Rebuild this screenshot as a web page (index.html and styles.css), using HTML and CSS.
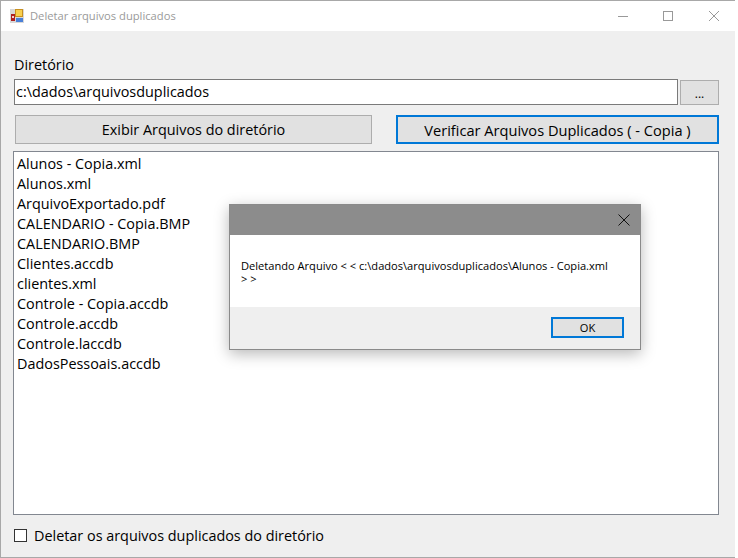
FILE: index.html
```html
<!DOCTYPE html>
<html lang="pt">
<head>
<meta charset="utf-8">
<title>Deletar arquivos duplicados</title>
<link rel="stylesheet" href="styles.css">
</head>
<body>
<div class="window">
  <header class="titlebar">
    <svg class="app-icon" width="14" height="14" viewBox="0 0 14 14">
      <rect x="0" y="0" width="14" height="14" fill="#d8d8d8"/>
      <rect x="1" y="5" width="4" height="7" fill="#b02020"/>
      <rect x="2" y="7" width="2" height="2" fill="#f0d0d0"/>
      <rect x="5" y="0" width="8" height="8" fill="#c89020"/>
      <rect x="6" y="1" width="6" height="6" fill="#f8d050"/>
      <rect x="6" y="9" width="7" height="4" fill="#4a80d8"/>
    </svg>
    <span class="title">Deletar arquivos duplicados</span>
    <div class="controls">
      <svg class="ctl ctl-min" width="10" height="10" viewBox="0 0 10 10"><path d="M0 5.5H10" stroke="#999" fill="none"/></svg>
      <svg class="ctl ctl-max" width="10" height="10" viewBox="0 0 10 10"><rect x="0.5" y="0.5" width="9" height="9" stroke="#999" fill="none"/></svg>
      <svg class="ctl ctl-close" width="10" height="10" viewBox="0 0 10 10"><path d="M0 0L10 10M10 0L0 10" stroke="#999" fill="none"/></svg>
    </div>
  </header>
  <main class="content">
    <div class="label">Diretório</div>
    <div class="path-row">
      <div class="textbox">c:\dados\arquivosduplicados</div>
      <button class="btn btn-browse">...</button>
    </div>
    <div class="action-row">
      <button class="btn btn-show">Exibir Arquivos do diretório</button>
      <button class="btn btn-verify">Verificar Arquivos Duplicados ( - Copia )</button>
    </div>
    <ul class="listbox">
      <li>Alunos - Copia.xml</li>
      <li>Alunos.xml</li>
      <li>ArquivoExportado.pdf</li>
      <li>CALENDARIO - Copia.BMP</li>
      <li>CALENDARIO.BMP</li>
      <li>Clientes.accdb</li>
      <li>clientes.xml</li>
      <li>Controle - Copia.accdb</li>
      <li>Controle.accdb</li>
      <li>Controle.laccdb</li>
      <li>DadosPessoais.accdb</li>
    </ul>
    <div class="check-row">
      <span class="checkbox"></span>
      <span>Deletar os arquivos duplicados do diretório</span>
    </div>
  </main>
  <div class="dialog">
    <div class="dialog-title">
      <svg width="12" height="12" viewBox="0 0 12 12"><path d="M0.5 0.5L11.5 11.5M11.5 0.5L0.5 11.5" stroke="#111" fill="none"/></svg>
    </div>
    <div class="dialog-body">Deletando Arquivo &lt; &lt; c:\dados\arquivosduplicados\Alunos - Copia.xml<br>&gt; &gt;</div>
    <div class="dialog-foot"><button class="btn-ok">OK</button></div>
  </div>
</div>
</body>
</html>
```
FILE: styles.css
```css
* { box-sizing: border-box; }
html, body { margin: 0; padding: 0; background: #fff; }
body { width: 738px; height: 558px; overflow: hidden; font-family: "Open Sans", "Noto Sans", sans-serif; color: #000; }
.window {
  position: relative;
  width: 735px;
  height: 558px;
  background: #efefef;
  border: 1px solid #a8a8a8;
  border-right: 0;
  display: flex;
  flex-direction: column;
}
.titlebar {
  height: 30px;
  background: #fff;
  display: flex;
  align-items: center;
  padding-left: 9px;
  flex: none;
}
.app-icon { flex: none; margin-top: -1px; }
.title { margin-left: 6px; font-size: 11.2px; color: #9a9a9a; margin-top: -1px; }
.controls { margin-left: auto; display: flex; align-items: center; height: 100%; padding-right: 16px; margin-top: -1px; }
.ctl { display: block; }
.ctl-max { margin-left: 35px; }
.ctl-close { margin-left: 36px; }
.content { flex: 1; padding: 25px 15px 0 12px; display: flex; flex-direction: column; font-size: 14.4px; }
.label { height: 23px; line-height: 18px; padding-left: 1px; }
.path-row { display: flex; align-items: flex-end; gap: 2px; height: 26px; padding-left: 1px; }
.textbox { width: 664px; height: 26px; background: #fff; border: 1px solid #7a7a7a; line-height: 24px; padding-left: 1px; white-space: nowrap; }
.btn { font: inherit; color: #000; background: #e1e1e1; border: 1px solid #adadad; padding: 0; }
.btn-browse { width: 39px; height: 25px; line-height: 26px; font-size: 12px; }
.action-row { display: flex; margin-top: 10px; height: 29px; padding-left: 2px; }
.btn-show { width: 357px; }
.btn-verify { width: 323px; margin-left: 24px; border: 2px solid #0078d7; font-size: 14.6px; }
.listbox { list-style: none; margin: 7px 0 0; width: 706px; height: 364px; background: #fff; border: 1px solid #828790; padding: 2px 0 0 3px; flex: none; }
.listbox li { height: 20px; line-height: 20px; white-space: nowrap; }
.check-row { display: flex; align-items: center; margin-top: 10px; height: 20px; padding-left: 1px; }
.checkbox { width: 13px; height: 13px; border: 1px solid #333; background: #fff; margin-right: 7px; flex: none; }
.dialog {
  position: absolute;
  left: 228px;
  top: 203px;
  width: 412px;
  height: 146px;
  background: #fff;
  border: 1px solid #8a8a8a;
  box-shadow: 0 4px 14px rgba(0,0,0,0.28);
  display: flex;
  flex-direction: column;
}
.dialog-title { height: 30px; background: #8c8c8c; display: flex; align-items: center; justify-content: flex-end; padding-right: 10px; flex: none; }
.dialog-body { height: 72px; padding: 24px 0 0 11px; font-size: 11.1px; line-height: 13px; color: #000; white-space: nowrap; flex: none; }
.dialog-foot { flex: 1; background: #efefef; display: flex; justify-content: flex-end; padding: 10px 16px 0 0; }
.btn-ok { width: 73px; height: 21px; padding: 0; background: #e1e1e1; border: 2px solid #0078d7; font: 400 11.1px "Open Sans", sans-serif; color: #000; }
```
